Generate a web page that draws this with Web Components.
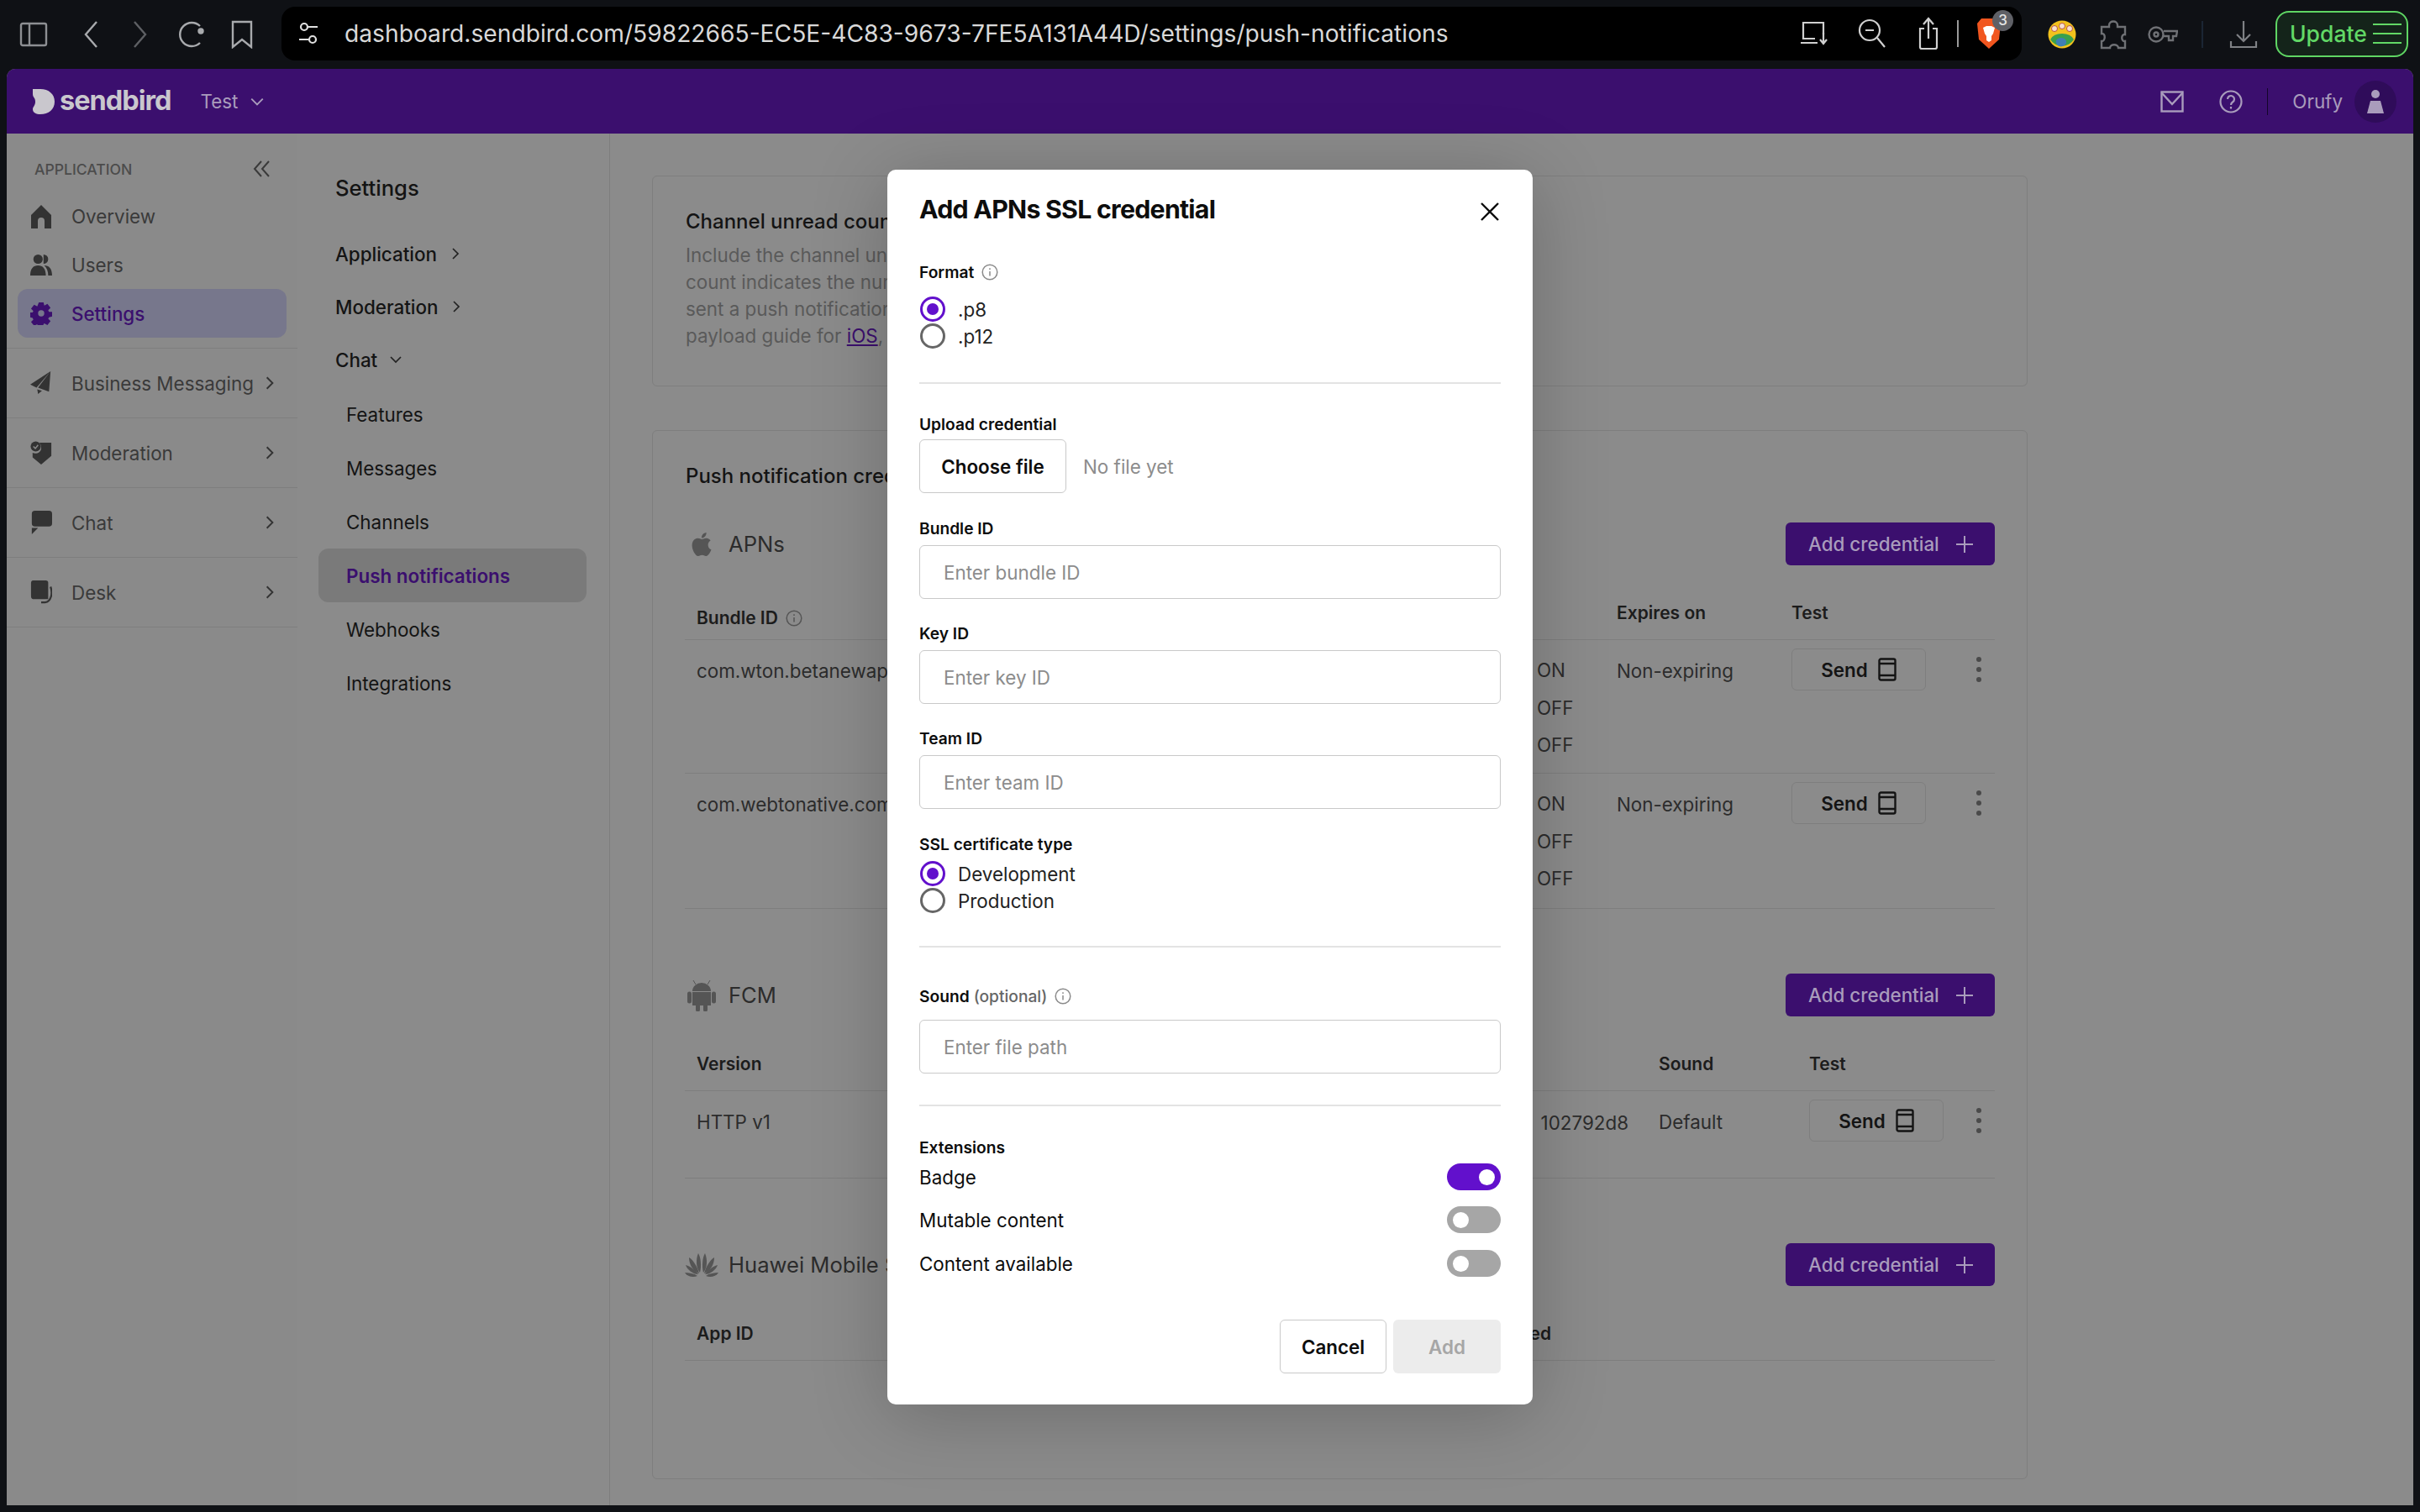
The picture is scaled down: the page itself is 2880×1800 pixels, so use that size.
<!DOCTYPE html>
<html lang="en">
<head>
<meta charset="UTF-8" />
<title>Sendbird - Push notifications</title>
<style>
  * { box-sizing: border-box; }
  html, body { margin: 0; height: 100%; overflow: hidden; background: #0f1115; font-family: Inter, "Liberation Sans", sans-serif; }
  app-shell { --ink: #141414; --body: #2c2c2c; --side: #3a3a3a; --muted: #5a5a5a; --line: #7e7e7e; --purple: #3b0f6e; --lilac: #a99cbc; }
</style>
</head>
<body>

<app-shell>
  <browser-bar></browser-bar>
  <page-frame>
    <app-header></app-header>
    <side-nav></side-nav>
    <settings-nav></settings-nav>
    <push-page></push-page>
    <credential-modal slot="modal"></credential-modal>
  </page-frame>
</app-shell>

<script>
  const reset = `<style>*,:host{box-sizing:border-box}</style>`;

  // Base class: open shadow root filled from a string
  class Box extends HTMLElement {
    constructor() {
      super();
      this.attachShadow({ mode: "open" }).innerHTML = reset + this.constructor.html;
    }
  }
  const define = (tag, html) => customElements.define(tag, class extends Box { static html = html; });

  const chevron = (dir, size, color) => {
    const d = { right: "M5 2l6 6-6 6", down: "M2 5l6 6 6-6" }[dir];
    return `<svg width="${size}" height="${size}" viewBox="0 0 16 16" fill="none" stroke="${color}" stroke-width="1.7"><path d="${d}"/></svg>`;
  };
  const infoIcon = (size, color) => `<svg width="${size}" height="${size}" viewBox="0 0 20 20" fill="none" stroke="${color}" stroke-width="1.5"><circle cx="10" cy="10" r="8.8"/><path d="M10 9v5.6"/><path d="M10 5.2v1.8"/></svg>`;

  define("app-shell", `<style>:host{display:flex;flex-direction:column;height:1800px;width:2880px}</style><slot></slot>`);

  define("page-frame", `<style>
    :host{display:block;margin:0 8px 8px;height:1710px;position:relative;overflow:hidden;border-radius:10px 10px 0 0;background:#8b8b8b}
    .grid{display:grid;grid-template-columns:346px 372px 1fr;grid-template-rows:77px 1fr;height:100%}
    ::slotted(app-header){grid-column:1 / -1}
    .layer{position:absolute;inset:0;display:flex;align-items:center;justify-content:center}
  </style>
  <div class="grid"><slot></slot></div>
  <div class="layer"><slot name="modal"></slot></div>`);

  // Browser chrome along the top
  define("browser-bar", `<style>
    :host{display:flex;align-items:center;height:82px;padding-left:20px;color:#9a9ca0;flex:none}
    .i{display:flex;align-items:center;justify-content:center;width:40px;height:48px;flex:none;position:relative}
    .url{display:flex;align-items:center;width:2071px;height:64px;background:#000;border-radius:16px;margin-left:27px;padding:0 21px 0 16px;margin-top:-2px}
    .txt{margin-left:27px;font:400 28.200px Inter,sans-serif;color:#d9d9d9;white-space:nowrap}
    .sep{width:2px;height:32px;background:#9a9a9a;flex:none}
    .update{display:flex;align-items:center;width:158px;height:55px;margin-left:18px;margin-top:-2px;padding-left:15px;border:2px solid #5fd664;border-radius:16px;background:#14241a;color:#62d966;font:500 26.500px Inter,sans-serif}
    .bars{margin-left:7px;width:34px;height:24px;display:flex;flex-direction:column;justify-content:space-between}
    .bars b{height:2.4px;background:#62d966;display:block}
    .badge{position:absolute;left:22px;top:-4px;width:25px;height:25px;border-radius:50%;background:#5f6066;color:#e5e5e5;font:500 17px/25px Inter,sans-serif;text-align:center}
  </style>
  <span class="i"><svg width="34" height="30" viewBox="0 0 34 30" fill="none" stroke="#8d8f93" stroke-width="2.4"><rect x="2" y="2" width="30" height="26" rx="2"/><path d="M12 2v26"/></svg></span>
  <span class="i" style="margin-left:28px"><svg width="18" height="34" viewBox="0 0 18 34" fill="none" stroke="#a8aaad" stroke-width="2.4"><path d="M16 2L3 17l13 15"/></svg></span>
  <span class="i" style="margin-left:19px"><svg width="18" height="34" viewBox="0 0 18 34" fill="none" stroke="#5e6064" stroke-width="2.4"><path d="M2 2l13 15L2 32"/></svg></span>
  <span class="i" style="margin-left:21px"><svg width="36" height="34" viewBox="0 0 36 34" fill="none" stroke="#a8aaad" stroke-width="2.4"><path d="M28 27a14 14 0 1 1 0-20"/><circle cx="29" cy="13" r="2.5" fill="#a8aaad"/></svg></span>
  <span class="i" style="margin-left:20px"><svg width="26" height="34" viewBox="0 0 26 34" fill="none" stroke="#a8aaad" stroke-width="2.4"><path d="M2 2h22v30l-11-9-11 9z"/></svg></span>
  <div class="url">
    <svg width="32" height="32" viewBox="0 0 32 32" fill="none" stroke="#e0e0e0" stroke-width="2.2"><circle cx="11" cy="8" r="4"/><path d="M16 8h11M5 23h11"/><circle cx="21" cy="23" r="4"/></svg>
    <span class="txt">dashboard.sendbird.com/59822665-EC5E-4C83-9673-7FE5A131A44D/settings/push-notifications</span>
    <span class="i" style="margin-left:auto"><svg width="34" height="30" viewBox="0 0 34 30" fill="none" stroke="#d0d0d0" stroke-width="2.2"><path d="M4 22V2h24v14M1 26h20M4 21h14"/><path d="M28 14v12M24 22l4 5 4-5"/></svg></span>
    <span class="i" style="margin-left:29px"><svg width="34" height="36" viewBox="0 0 34 36" fill="none" stroke="#d0d0d0" stroke-width="2.2"><circle cx="14" cy="14" r="12"/><path d="M23 23l9 11M9 14h10"/></svg></span>
    <span class="i" style="margin-left:27px"><svg width="26" height="40" viewBox="0 0 26 40" fill="none" stroke="#d0d0d0" stroke-width="2.2"><path d="M8 14H3v22a2 2 0 0 0 2 2h16a2 2 0 0 0 2-2V14h-5"/><path d="M13 26V2M7 9l6-7 6 7"/></svg></span>
    <span class="sep" style="margin-left:14px"></span>
    <span class="i" style="margin-left:18px;width:36px">
      <svg width="32" height="38" viewBox="0 0 32 38"><path d="M7 1h18l5 6-2 19-12 11L4 26 2 7z" fill="#f1561f"/><path d="M9 12l4-2h6l4 2-2 7-2 3v5l-3 2-3-2v-5l-2-3z" fill="#fff"/></svg>
      <span class="badge">3</span>
    </span>
  </div>
  <span class="i" style="margin-left:28px"><svg width="34" height="34" viewBox="0 0 34 34"><circle cx="17" cy="17" r="16.5" fill="#f2c21d"/><path d="M3 23a15 11 0 0 1 28 0 16.500 16.500 0 0 1-28 0z" fill="#39a04d"/><path d="M12 22c6-3 11 1 10 5s-7 6-10 3-3-6 0-8z" fill="#3f7fb5"/><circle cx="8" cy="10" r="3.500" fill="#f7e2cf" stroke="#a33" stroke-width=".8"/><circle cx="17" cy="7" r="3.500" fill="#f7e2cf" stroke="#a33" stroke-width=".8"/><circle cx="26" cy="10" r="3.500" fill="#f7e2cf" stroke="#a33" stroke-width=".8"/></svg></span>
  <span class="i" style="margin-left:21px"><svg width="36" height="36" viewBox="0 0 36 36" fill="none" stroke="#6f7175" stroke-width="2.4"><path d="M13 7c0-6 10-6 10 0v2h9v9c-5-1-5 9 0 8v8h-8c0-5-10-5-10 0H4v-8c5 0 5-10 0-9V9h9z"/></svg></span>
  <span class="i" style="margin-left:19px"><svg width="36" height="22" viewBox="0 0 36 22" fill="none" stroke="#6f7175" stroke-width="2.4"><circle cx="10" cy="11" r="8.500"/><circle cx="10" cy="11" r="2.500"/><path d="M19 7h16l-1 6h-4v5h-5v-5h-6"/></svg></span>
  <span class="sep" style="margin-left:26px;background:#1b2634"></span>
  <span class="i" style="margin-left:28px"><svg width="34" height="34" viewBox="0 0 34 34" fill="none" stroke="#7f8185" stroke-width="2.2"><path d="M17 1v24M9 17l8 8 8-8M2 25v7h30v-7"/></svg></span>
  <div class="update">Update<span class="bars"><b></b><b></b><b></b></span></div>`);

  // Purple application bar
  define("app-header", `<style>
    :host{display:flex;align-items:center;background:var(--purple);padding-left:30px;padding-right:20px}
    .logo{font:700 32.500px Inter,sans-serif;letter-spacing:-1px;color:#c9c7cd;margin-left:5px;line-height:1}
    .app{font:400 22.4px Inter,sans-serif;color:var(--lilac);margin-left:35px}
    .chev{margin-left:14px;display:flex}
    .right{margin-left:auto;display:flex;align-items:center}
    .sep{width:1px;height:32px;background:#14062b;margin:0 29px}
    .name{font:400 22.4px Inter,sans-serif;color:var(--lilac)}
    .avatar{width:50px;height:50px;border-radius:50%;background:#2f0c5a;margin-left:14px;display:flex;align-items:center;justify-content:center}
  </style>
  <svg width="28" height="30" viewBox="0 0 28 30"><path d="M1 0h9c10 0 17 6 17 15s-7 15-17 15c-5 0-9-2-9-6 0-3 3-4 3-9S1 10 1 6z" fill="#c9c7cd"/></svg>
  <span class="logo">sendbird</span>
  <span class="app">Test</span>
  <span class="chev">${chevron("down", 18, "#a99cbc")}</span>
  <div class="right">
    <svg width="28" height="26" viewBox="0 0 28 26" fill="none" stroke="#a99cbc" stroke-width="2.4"><rect x="1.500" y="1.500" width="25" height="23"/><path d="M2 3l12 13L26 3"/></svg>
    <svg style="margin-left:42px" width="28" height="30" viewBox="0 0 28 30" fill="none" stroke="#a99cbc" stroke-width="2.200"><circle cx="14" cy="15" r="12.500"/><path d="M10 12a4 4 0 1 1 6 3.500c-1.500 1-2 1.500-2 3.500"/><path d="M14 21v2.500"/></svg>
    <span class="sep"></span>
    <span class="name">Orufy</span>
    <span class="avatar"><svg width="22" height="30" viewBox="0 0 22 30" fill="#a99cbc"><circle cx="11" cy="6" r="5"/><path d="M5 14h12l4 15H1z"/></svg></span>
  </div>`);

  // Left sidebar
  define("side-nav", `<style>
    :host{display:block;background:#8a8a8a;padding-top:21px}
    .head{display:flex;align-items:center;justify-content:space-between;height:42px;margin-bottom:7px;padding:0 30px 0 33px}
    .head span{font:500 17.6px Inter,sans-serif;color:#4c4c4c}
  </style>
  <div class="head"><span>APPLICATION</span><svg width="24" height="24" viewBox="0 0 24 24" fill="none" stroke="#3a3a3a" stroke-width="2"><path d="M11 3l-8 9 8 9M20 3l-8 9 8 9"/></svg></div>
  <side-item><svg viewBox="0 0 26 28" fill="#333"><path d="M13 0l12 12v16h-8v-9a4 4 0 0 0-8 0v9H1V12z"/></svg>Overview</side-item>
  <side-item><svg viewBox="0 0 28 28" fill="#333"><circle cx="10" cy="7" r="6"/><path d="M17 1a6 6 0 0 1 0 12zM0 28c0-9 4-13 10-13s10 4 10 13zM18 15c6 0 10 4 10 13h-5c0-6-2-10-5-13z"/></svg>Users</side-item>
  <side-item active><svg viewBox="0 0 28 28" fill="#3b0f6e"><path d="M11 0h6l1 4 4-2 4 5-3 3 1 2h4v6l-4 1-1 2 3 3-4 5-4-2-1 1-1 4h-6l-1-4-4 2-4-5 3-3-1-2-4-1v-6h4l1-2-3-3 4-5 4 2z"/><circle cx="14" cy="14" r="4" fill="#77778c"/></svg>Settings</side-item>
  <div style="height:13px;border-bottom:1px solid var(--line)"></div>
  <side-group><svg viewBox="0 0 28 30" fill="#333"><path d="M26 0L0 17l8 4zM26 0L10 21l14 5zM9 23l1 6 5-4z"/></svg>Business Messaging</side-group>
  <side-group><svg viewBox="0 0 28 30" fill="#333"><path d="M12 2h15v17l-13 11-11-9v-6c4 2 11 0 11-6s-2-5-2-7z"/><circle cx="7" cy="7" r="6.500"/><path d="M4 7l2.500 2.500L10 5" stroke="#8a8a8a" stroke-width="1.600" fill="none"/></svg>Moderation</side-group>
  <side-group><svg viewBox="0 0 28 30" fill="#333"><path d="M6 0h18a4 4 0 0 1 4 4v12a4 4 0 0 1-4 4H6a4 4 0 0 1-4-4V4a4 4 0 0 1 4-4zM2 22h8l-8 8z"/></svg>Chat</side-group>
  <side-group><svg viewBox="0 0 28 30" fill="#333"><path d="M3 0h17a3 3 0 0 1 3 3v21H5a4 4 0 0 1-4-4V3a3 3 0 0 1 2-3z"/><path d="M26 8c3 8 1 19-7 20h-5" fill="none" stroke="#333" stroke-width="2.400"/></svg>Desk</side-group>`);

  define("side-item", `<style>
    :host{display:flex;align-items:center;width:320px;height:57.500px;margin-left:13px;padding-left:15px;border-radius:12px;font:400 22.4px Inter,sans-serif;color:var(--side)}
    :host([active]){background:#77778c;color:var(--purple);font-weight:500;height:58px}
    ::slotted(svg){width:26px;height:28px;margin-right:23px;flex:none}
  </style><slot></slot>`);

  define("side-group", `<style>
    :host{display:flex;align-items:center;height:83px;padding-left:28px;padding-right:24px;border-bottom:1px solid var(--line);font:400 22.4px Inter,sans-serif;color:var(--side)}
    ::slotted(svg){width:26px;height:28px;margin-right:23px;flex:none}
    .c{margin-left:auto;display:flex}
  </style><slot></slot><span class="c">${chevron("right", 18, "#333")}</span>`);

  // Second column of links
  define("settings-nav", `<style>
    :host{display:block;padding:45px 0 0 45px;border-right:1px solid var(--line)}
    h2{margin:0 0 26.500px;font:500 25.600px/40px Inter,sans-serif;color:var(--ink)}
    .sub{margin:1.500px 0 0 -20px;display:block}
  </style>
  <h2>Settings</h2>
  <nav-parent>Application${chevron("right", 16, "#222")}</nav-parent>
  <nav-parent>Moderation${chevron("right", 16, "#222")}</nav-parent>
  <nav-parent>Chat${chevron("down", 16, "#222")}</nav-parent>
  <div class="sub">
    <nav-link>Features</nav-link>
    <nav-link>Messages</nav-link>
    <nav-link>Channels</nav-link>
    <nav-link active>Push notifications</nav-link>
    <nav-link>Webhooks</nav-link>
    <nav-link>Integrations</nav-link>
  </div>`);

  define("nav-parent", `<style>
    :host{display:flex;align-items:center;gap:14px;height:63px;font:500 22.400px Inter,sans-serif;color:var(--ink)}
  </style><slot></slot>`);

  define("nav-link", `<style>
    :host{display:flex;align-items:center;width:319px;height:64px;padding-left:33px;border-radius:12px;font:400 22.400px Inter,sans-serif;color:var(--ink)}
    :host([active]){background:#7a7a7a;color:var(--purple);font-weight:600}
  </style><slot></slot>`);

  // Main scroll area
  define("push-page", `<style>
    :host{display:block;padding:50px 0 0 50px}
    .card{width:1637px;border:1px solid var(--line);border-radius:6px}
    .one{height:251px;padding:34px 39px;margin-bottom:52px}
    .two{height:1249px;padding:34px 38px 0 39px}
    h3{margin:0;font:500 24px/40px Inter,sans-serif;color:var(--ink)}
    p{margin:4px 0 0;font:400 22.400px/32px Inter,sans-serif;color:var(--muted);white-space:nowrap}
    a{color:var(--purple);text-decoration:underline}
    .lead{margin-bottom:35px}
    .cols-a{--cols:1000px 95px 208px 219px 8px}
    .cols-b{--cols:237px 908px 179px 198px 8px}
    .cols-c{--cols:237px 780px 1fr}
    section{margin-bottom:77px}
    .st{display:flex;flex-direction:column;padding-top:14px;line-height:44.500px}
    .dual{display:flex;justify-content:space-between;padding-right:36px;padding-top:24px}
    .right{text-align:right}
  </style>
  <div class="card one">
    <h3>Channel unread count</h3>
    <p>Include the channel unread count in the notification payload. The unread<br>
    count indicates the number of unread messages in a channel for users who are<br>
    sent a push notification. To learn more about this, see our push notification<br>
    payload guide for <a>iOS</a>, <a>Android</a>.</p>
  </div>
  <div class="card two">
    <h3 class="lead">Push notification credentials</h3>
    <section class="cols-a">
      <section-head name="APNs"><svg width="28" height="34" viewBox="0 0 24 24" fill="#555"><path d="M12.152 6.896c-.948 0-2.415-1.078-3.960-1.040-2.040.027-3.910 1.183-4.961 3.014-2.117 3.675-.546 9.103 1.519 12.090 1.013 1.454 2.208 3.090 3.792 3.039 1.520-.065 2.090-.987 3.935-.987 1.831 0 2.350.987 3.960.948 1.637-.026 2.676-1.480 3.676-2.948 1.156-1.688 1.636-3.325 1.662-3.415-.039-.013-3.182-1.221-3.220-4.857-.026-3.040 2.480-4.494 2.597-4.559-1.429-2.090-3.623-2.324-4.390-2.376-2-.156-3.675 1.090-4.610 1.090zM15.530 3.830c.843-1.012 1.400-2.427 1.245-3.830-1.207.052-2.662.805-3.532 1.818-.780.896-1.454 2.338-1.273 3.714 1.338.104 2.715-.688 3.559-1.701"/></svg></section-head>
      <table-row head style="height:89px;padding-top:44px">
        <span style="display:flex;align-items:center;gap:9px;margin-top:6px">Bundle ID ${infoIcon(20, "#555")}</span><span></span><span>Expires on</span><span>Test</span><span></span>
      </table-row>
      <table-row style="height:159px">
        <span style="padding-top:23px">com.wton.betanewapp</span>
        <span class="st"><span>ON</span><span>OFF</span><span>OFF</span></span>
        <span style="padding-top:23px">Non-expiring</span>
        <send-button></send-button><row-menu></row-menu>
      </table-row>
      <table-row style="height:161px">
        <span style="padding-top:23px">com.webtonative.com</span>
        <span class="st"><span>ON</span><span>OFF</span><span>OFF</span></span>
        <span style="padding-top:23px">Non-expiring</span>
        <send-button></send-button><row-menu></row-menu>
      </table-row>
    </section>
    <section class="cols-b">
      <section-head name="FCM"><svg width="34" height="38" viewBox="0 0 34 38" fill="#555"><path d="M6 14a11 10 0 0 1 22 0zM6 15h22v16H6zM0 17a2.500 2.500 0 0 1 5 0v9a2.500 2.500 0 0 1-5 0zM29 17a2.500 2.500 0 0 1 5 0v9a2.500 2.500 0 0 1-5 0zM10 31h5v5a2.500 2.500 0 0 1-5 0zM19 31h5v5a2.500 2.500 0 0 1-5 0z"/><path d="M10 6L7 1M24 6l3-5" stroke="#555" fill="none"/></svg></section-head>
      <table-row head style="height:89px;padding-top:44px">
        <span>Version</span><span>Project ID</span><span>Sound</span><span>Test</span><span></span>
      </table-row>
      <table-row style="height:104px">
        <span style="padding-top:23px">HTTP v1</span>
        <span class="dual"><span>test</span><span>102792d8</span></span>
        <span style="padding-top:23px">Default</span>
        <send-button></send-button><row-menu></row-menu>
      </table-row>
    </section>
    <section class="cols-c">
      <section-head name="Huawei Mobile Services"><svg width="40" height="30" viewBox="-20 -26 40 30" fill="#555"><path d="M-2-2C-7-8-7-18-4-25-1-20 0-10-2-2z"/><path d="M2-2C7-8 7-18 4-25 1-20 0-10 2-2z"/><path d="M-3-1C-10-4-15-11-15-20-10-17-5-9-3-1z"/><path d="M3-1C10-4 15-11 15-20 10-17 5-9 3-1z"/><path d="M-4 0C-10 0-17-5-19-11-13-9-7-5-4 0z"/><path d="M4 0C10 0 17-5 19-11 13-9 7-5 4 0z"/><path d="M-5 2C-10 4-17 3-20-2-15-2-9-1-5 2z"/><path d="M5 2C10 4 17 3 20-2 15-2 9-1 5 2z"/></svg></section-head>
      <table-row head style="height:89px;padding-top:44px">
        <span>App ID</span><span class="right">Updated</span><span></span>
      </table-row>
    </section>
  </div>`);

  class SectionHead extends Box {
    static html = `<style>
      :host{display:flex;align-items:center;height:51px}
      .ic{width:44px;display:flex;justify-content:center;flex:none;margin-left:-3px}
      .name{font:400 25.600px Inter,sans-serif;color:var(--body);margin-left:10px}
      .add{margin-left:auto;display:flex;align-items:center;width:249px;height:51px;padding-left:27px;border-radius:6px;background:var(--purple);color:var(--lilac);font:500 22.400px Inter,sans-serif}
      .add svg{margin-left:18px}
    </style>
    <span class="ic"><slot></slot></span><span class="name"></span>
    <span class="add">Add credential<svg width="24" height="24" viewBox="0 0 24 24" stroke="#a99cbc" stroke-width="2"><path d="M12 2v20M2 12h20"/></svg></span>`;
    connectedCallback() {
      this.shadowRoot.querySelector(".name").textContent = this.getAttribute("name");
    }
  }
  customElements.define("section-head", SectionHead);

  define("table-row", `<style>
    :host{display:grid;grid-template-columns:var(--cols);margin-left:-1px;padding-left:14px;border-bottom:1px solid var(--line);font:400 22.400px Inter,sans-serif;color:var(--body);white-space:nowrap;align-content:start}
    :host([head]){font-weight:600;font-size:21px;color:#1c1c1c}
  </style><slot></slot>`);

  define("send-button", `<style>
    :host{display:flex;align-items:center;justify-content:center;gap:12px;width:160px;height:50px;margin-top:10px;border:1px solid var(--line);border-radius:6px;font:600 22.400px Inter,sans-serif;color:var(--ink)}
  </style>Send<svg width="22" height="28" viewBox="0 0 22 28" fill="none" stroke="#141414" stroke-width="2.400"><rect x="1.500" y="1.500" width="19" height="25" rx="2"/><path d="M2 7h18M2 21h18"/></svg>`);

  define("row-menu", `<style>
    :host{display:flex;flex-direction:column;align-items:center;justify-content:center;gap:6px;height:50px;margin-top:10px;width:8px}
    b{width:6px;height:6px;border-radius:50%;background:#4a4a4a;display:block}
  </style><b></b><b></b><b></b>`);

  // Modal dialog
  define("credential-modal", `<style>
    :host{display:block;width:768px;height:1470px;padding:27px 38px 0;background:#fff;border-radius:10px;box-shadow:0 12px 90px rgba(0,0,0,.22);font-family:Inter,sans-serif}
    header{display:flex;justify-content:space-between;height:40px}
    h1{margin:0;font:700 30.300px/40px Inter,sans-serif;letter-spacing:-.75px;color:#0d0d0d}
    .x{margin-top:12px;margin-right:2px;flex:none}
    .lab{display:flex;align-items:center;gap:9px;height:24px;font:600 19.200px Inter,sans-serif;color:#0d0d0d}
    .opt{font-weight:500;color:#666;margin-left:-4px}
    hr{border:0;height:2px;background:#e3e3e3;margin:0}
    .upload{display:flex;align-items:center;margin-top:6px}
    .choose{display:flex;align-items:center;justify-content:center;width:175px;height:64px;border:1px solid #c9c9c9;border-radius:6px;font:600 22.400px Inter,sans-serif;color:#0d0d0d}
    .nofile{margin-left:20px;font:400 22.400px Inter,sans-serif;color:#8c8c8c}
    .foot{display:flex;justify-content:flex-end;gap:8px;margin-top:51px}
    .btn{display:flex;align-items:center;justify-content:center;height:64px;border-radius:6px;font:600 22.400px Inter,sans-serif}
    .cancel{width:127px;border:1px solid #c9c9c9;color:#0d0d0d}
    .add{width:128px;background:#ececec;color:#a6a6a6}
  </style>
  <header>
    <h1>Add APNs SSL credential</h1>
    <svg class="x" width="22" height="22" viewBox="0 0 22 22" stroke="#0d0d0d" stroke-width="2.400"><path d="M1 1l20 20M21 1L1 21"/></svg>
  </header>
  <div class="lab" style="margin-top:43px">Format ${infoIcon(20, "#8a8a8a")}</div>
  <div style="margin-top:16px">
    <radio-option checked>.p8</radio-option>
    <radio-option>.p12</radio-option>
  </div>
  <hr style="margin-top:39px">
  <div class="lab" style="margin-top:36px">Upload credential</div>
  <div class="upload"><span class="choose">Choose file</span><span class="nofile">No file yet</span></div>
  <form-field style="margin-top:30px" label="Bundle ID" hint="Enter bundle ID"></form-field>
  <form-field style="margin-top:29px" label="Key ID" hint="Enter key ID"></form-field>
  <form-field style="margin-top:29px" label="Team ID" hint="Enter team ID"></form-field>
  <div class="lab" style="margin-top:30px">SSL certificate type</div>
  <div style="margin-top:7px">
    <radio-option checked>Development</radio-option>
    <radio-option>Production</radio-option>
  </div>
  <hr style="margin-top:38px">
  <div class="lab" style="margin-top:46px">Sound <span class="opt">(optional)</span> ${infoIcon(20, "#8a8a8a")}</div>
  <form-field style="margin-top:16px" hint="Enter file path"></form-field>
  <hr style="margin-top:37px">
  <div class="lab" style="margin-top:37px">Extensions</div>
  <toggle-row style="margin-top:7px" on>Badge</toggle-row>
  <toggle-row style="margin-top:19px">Mutable content</toggle-row>
  <toggle-row style="margin-top:20px">Content available</toggle-row>
  <div class="foot"><span class="btn cancel">Cancel</span><span class="btn add">Add</span></div>`);

  class FormField extends HTMLElement {
    constructor() {
      super();
      this.attachShadow({ mode: "open" }).innerHTML = reset + `<style>
        :host{display:block}
        .lab{height:24px;margin-bottom:8px;font:600 19.200px/24px Inter,sans-serif;color:#0d0d0d}
        .in{display:flex;align-items:center;height:64px;padding-left:28px;border:1px solid #c9c9c9;border-radius:6px;font:400 22.400px Inter,sans-serif;color:#8c8c8c}
      </style><div class="lab"></div><div class="in"></div>`;
    }
    connectedCallback() {
      const label = this.shadowRoot.querySelector(".lab");
      if (this.hasAttribute("label")) label.textContent = this.getAttribute("label");
      else label.remove();
      this.shadowRoot.querySelector(".in").textContent = this.getAttribute("hint");
    }
  }
  customElements.define("form-field", FormField);

  define("radio-option", `<style>
    :host{display:flex;align-items:center;gap:15px;height:32px;padding-left:1px;font:400 22.400px Inter,sans-serif;color:#222}
    .r{width:30px;height:30px;border-radius:50%;border:3px solid #666;display:flex;align-items:center;justify-content:center;flex:none}
    :host([checked]) .r{border-color:#6210cc}
    :host([checked]) .r::after{content:"";width:14px;height:14px;border-radius:50%;background:#6210cc}
  </style><span class="r"></span><slot></slot>`);

  define("toggle-row", `<style>
    :host{display:flex;align-items:center;justify-content:space-between;height:32px;font:400 22.400px Inter,sans-serif;color:#0d0d0d}
    .t{display:flex;align-items:center;width:64px;height:32px;border-radius:16px;background:#a6a6a6;padding:0 7px}
    .t::after{content:"";width:19px;height:19px;border-radius:50%;background:#fff}
    :host([on]) .t{background:#6210cc;justify-content:flex-end}
  </style><slot></slot><span class="t"></span>`);
</script>
</body>
</html>
